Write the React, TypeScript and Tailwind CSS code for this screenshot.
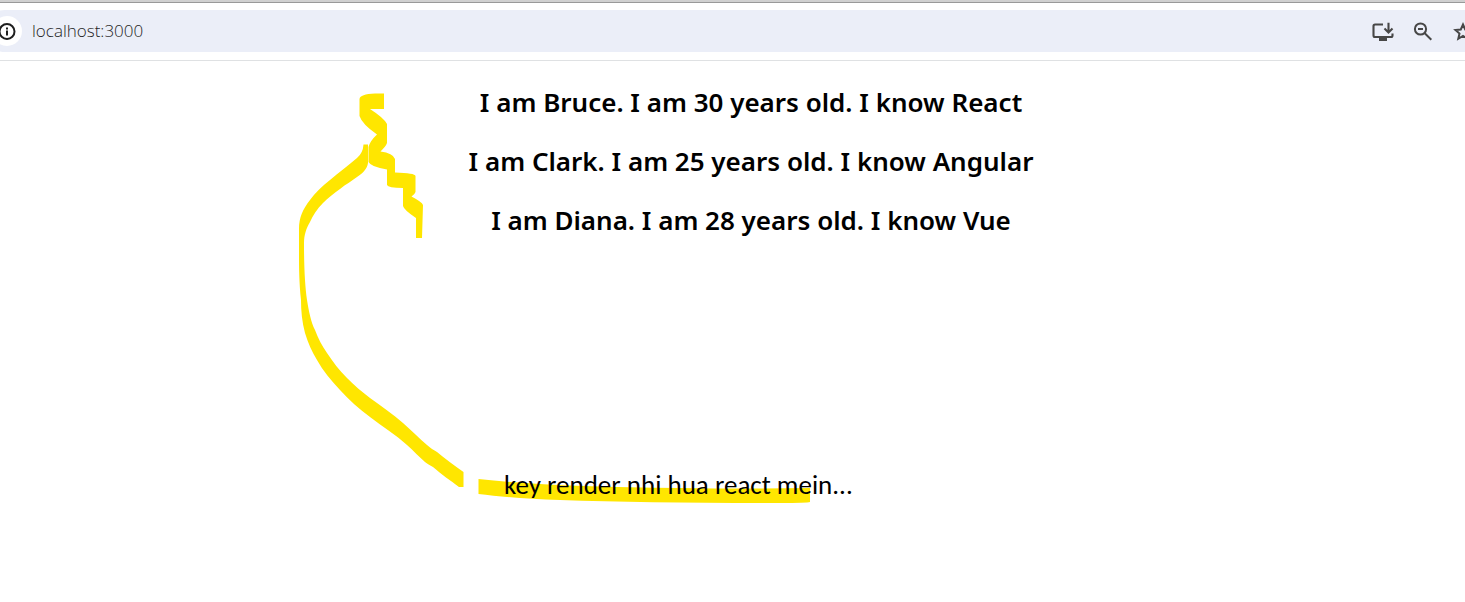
import React from "react";

const people = [
  { id: 1, name: "Bruce", age: 30, skill: "React" },
  { id: 2, name: "Clark", age: 25, skill: "Angular" },
  { id: 3, name: "Diana", age: 28, skill: "Vue" },
];

function InfoIcon() {
  return (
    <svg className="size-5" viewBox="0 0 20 20" fill="none" stroke="currentColor" strokeWidth="2" aria-hidden="true">
      <circle cx="10" cy="10.500" r="7.500" />
      <path d="M10 9.500v5M10 6.500v2" />
    </svg>
  );
}

function InstallIcon() {
  return (
    <svg className="size-6" viewBox="0 0 24 24" fill="none" stroke="currentColor" strokeWidth="2.1" aria-hidden="true">
      <path d="M12 5.500H4Q2.500 5.500 2.500 7V16.500Q2.500 18 4 18H20Q21.500 18 21.500 16.500V14.500" />
      <path d="M17.500 3.800V13M13.500 9.500L17.500 13.500L21.500 9.500" />
      <path d="M8 18H16V22H8Z" fill="currentColor" stroke="none" />
    </svg>
  );
}

function ZoomOutIcon() {
  return (
    <svg className="size-6" viewBox="0 0 24 24" fill="none" stroke="currentColor" strokeWidth="2" aria-hidden="true">
      <circle cx="9.500" cy="10" r="5.600" />
      <path d="M13.500 14L20.300 20.800M7 10H12" />
    </svg>
  );
}

function StarIcon() {
  return (
    <svg className="size-6" viewBox="0 0 24 24" fill="none" stroke="currentColor" strokeWidth="2" aria-hidden="true">
      <path d="M12 5.500L14.200 10.500L19.500 11L15.500 14.500L16.700 19.800L12 17L7.300 19.800L8.500 14.500L4.500 11L9.800 10.500Z" />
    </svg>
  );
}

function AddressBar() {
  return (
    <header className="overflow-hidden border-b border-[#dfe1e3] bg-white">
      <div className="h-[3px] border-b border-[#999999] bg-[#d0d0d0]" />
      <div className="-mr-2.5 -ml-4 mt-[7px] mb-2 flex h-[42px] items-center rounded-l-full bg-[#ebeef8] pl-2">
        <button
          type="button"
          aria-label="Site information"
          className="flex size-[30px] shrink-0 items-center justify-center rounded-full bg-white text-[#1f1f1f]"
        >
          <InfoIcon />
        </button>
        <input
          type="text"
          aria-label="Address"
          defaultValue="localhost:3000"
          className="ml-[10px] min-w-0 flex-1 bg-transparent font-['Open_Sans',sans-serif] text-[17px] leading-6 font-light text-[#1f1f1f] outline-none"
        />
        <div className="flex items-center gap-4 text-[#474747]">
          <button type="button" aria-label="Install app">
            <InstallIcon />
          </button>
          <button type="button" aria-label="Zoom">
            <ZoomOutIcon />
          </button>
          <button type="button" aria-label="Bookmark this page">
            <StarIcon />
          </button>
        </div>
      </div>
    </header>
  );
}

function HighlighterMarks() {
  return (
    <svg
      aria-hidden="true"
      className="pointer-events-none absolute top-0 left-0"
      width="860"
      height="541"
      viewBox="0 61 860 541"
      fill="#ffe600"
    >
      <path d="M384 93.500H375Q360 94 359.500 99V116Q362 124 377 134.500Q370 141 368.500 147V162Q371 167 387 169.500V185Q388 188 403 188V206Q404 210 416 218V238H422L423 205Q422 202 411.500 196.500Q415 194 415.500 192V176Q415 173 395 172.500V159Q393 153 380.500 151.500Q386 146 387 143V124Q384 118 370 109H384Z" />
      <path d="M363.500 144.500H368V163C367 169 363 173 357 177C352 181 346 184 340 189C334 193 328 198 323 203C317 209 313 215 310 222C306 229 304 235 304 243C304 268 305 285 307 300C309 312 311 322 315 330C318 338 322 346 327 353C333 362 339 370 347 378C354 385 362 392 370 398C381 406 393 414 403 423C412 431 420 439 427 445C430 448 434 450 437 452C445 459 454 465 463.500 472V487H459C450 480 442 475 433 467C430 465 427 464 425 462C419 457 414 451 407 445C396 435 383 427 370 417C359 409 349 400 340 390C331 380 323 371 317 360C312 352 308 343 305 333C302 322 301 311 301 300C299 281 299 266 299 251V229C299 217 303 209 310 200C315 193 322 186 330 180C339 172 349 165 357 158Q363 153 363.500 144.500Z" />
      <path d="M478.500 479Q550 487 680 488Q750 489 810 488V502Q807 503 780 503Q650 503 560 500Q510 498 478.500 494Z" />
    </svg>
  );
}

export default function App() {
  return (
    <div className="min-h-screen bg-white text-black">
      <AddressBar />
      <main className="relative pt-[23px] pb-12 pl-[37px]">
        <HighlighterMarks />
        <div className="relative flex flex-col gap-[23px] text-center font-['Noto_Sans',sans-serif] text-[26px] leading-9 font-semibold">
          {people.map((person) => (
            <h2 key={person.id}>
              I am {person.name}. I am {person.age} years old. I know {person.skill}
            </h2>
          ))}
        </div>
        <p className="relative mt-[229px] pl-[467px] font-[Carlito,Lato,sans-serif] text-[27px] leading-9">
          key render nhi hua react mein...
        </p>
      </main>
    </div>
  );
}
